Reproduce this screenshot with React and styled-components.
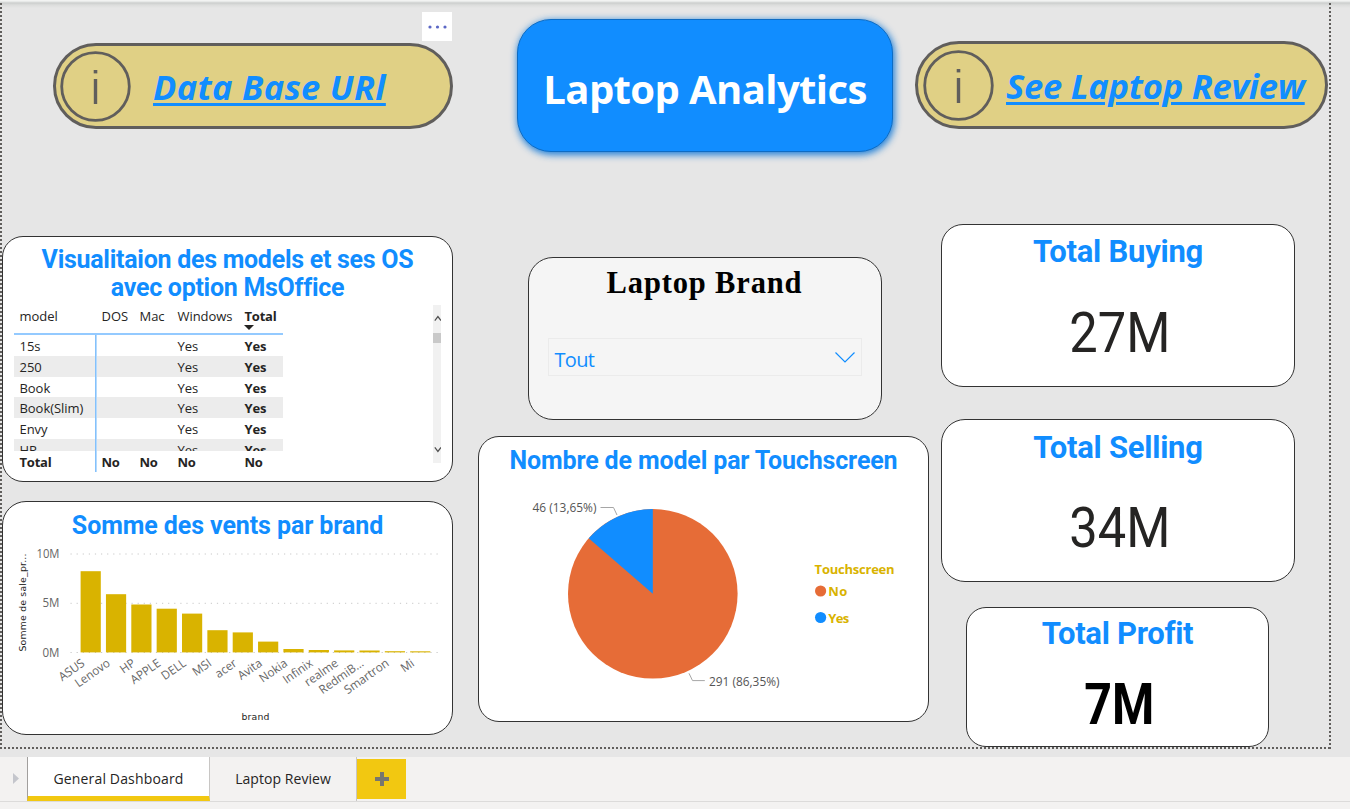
import React from "react";
import styled, { createGlobalStyle } from "styled-components";

const GlobalStyle = createGlobalStyle`
  * { box-sizing: border-box; }
  body {
    margin: 0;
    background: #e6e6e6;
    font-family: "Open Sans", "Noto Sans", sans-serif;
    color: #252423;
    overflow: hidden;
  }
`;

const azure = "#118dff";
const gold = "#d9b300";
const din = `Roboto, "Liberation Sans", sans-serif`;

const Page = styled.div`
  display: flex;
  flex-direction: column;
  width: 1350px;
  height: 809px;
  background: linear-gradient(#f2f3f2 0 1px, #f0f2f1 1px, #cccecd 3px, #dcdddc 5px, #e6e6e6 8px);
`;

const Canvas = styled.main`
  width: 1331px;
  height: 746px;
  margin-top: 3px;
  margin-bottom: 8px;
  padding: 0 2px;
  background:
    repeating-linear-gradient(#605e5c 0 2px, transparent 2px 4px) 0 0 / 2px 100% no-repeat,
    repeating-linear-gradient(#605e5c 0 2px, transparent 2px 4px) 100% 0 / 2px 100% no-repeat,
    repeating-linear-gradient(90deg, #605e5c 0 2px, transparent 2px 4px) 0 100% / 100% 2px no-repeat;
`;

const Header = styled.header`
  display: flex;
  align-items: flex-start;
  height: 221px;
  padding-left: 51px;
`;

const Pill = styled.a`
  position: relative;
  display: flex;
  align-items: center;
  flex: none;
  width: ${(p) => p.$width}px;
  height: ${(p) => p.$height}px;
  margin-top: ${(p) => p.$top}px;
  padding-left: ${(p) => p.$inset}px;
  border: 3px solid #605e5c;
  border-radius: 44px;
  background: #e0d085;
`;

const PillText = styled.span`
  margin-left: ${(p) => p.$gap}px;
  padding-top: 2px;
  color: ${azure};
  font: italic 700 34.5px/48px "Open Sans", sans-serif;
  letter-spacing: ${(p) => p.$spacing}px;
  white-space: nowrap;
  text-decoration: underline;
  text-decoration-thickness: 3px;
  text-underline-offset: 3px;
`;

const MoreButton = styled.button`
  position: absolute;
  top: -34px;
  right: -2px;
  display: flex;
  align-items: center;
  justify-content: center;
  width: 30px;
  height: 29px;
  padding: 0;
  border: 0;
  background: #fff;
`;

const Banner = styled.h1`
  flex: none;
  width: 376px;
  height: 133px;
  margin: 16px 22px 0 64px;
  border: 1px solid #0d6cc4;
  border-radius: 34px;
  background: ${azure};
  box-shadow: 1px 2px 7px 1px rgba(17, 120, 215, 0.9);
  color: #fff;
  font: 700 40px/138px "Open Sans", sans-serif;
  letter-spacing: -0.6px;
  text-align: center;
  white-space: nowrap;
`;

const Body = styled.div`
  display: flex;
  align-items: flex-start;
`;

const Column = styled.section`
  display: flex;
  flex-direction: column;
  align-items: center;
  flex: none;
  width: ${(p) => p.$width}px;
  gap: ${(p) => p.$gap}px;
  margin-left: ${(p) => p.$left || 0}px;
  padding-top: ${(p) => p.$top || 0}px;
`;

const Card = styled.article`
  display: flex;
  flex-direction: column;
  flex: none;
  width: ${(p) => p.$width}px;
  height: ${(p) => p.$height}px;
  margin-top: ${(p) => p.$push || 0}px;
  margin-left: ${(p) => p.$shift || 0}px;
  border: 1px solid #333;
  border-radius: ${(p) => p.$radius || 21}px;
  background: ${(p) => p.$fill || "#fff"};
  overflow: hidden;
`;

const CardTitle = styled.h2`
  flex: none;
  margin: 0;
  padding-top: ${(p) => p.$top}px;
  color: ${azure};
  font: 700 ${(p) => p.$size || 25}px/28px ${din};
  letter-spacing: ${(p) => p.$spacing || 0}px;
  text-align: center;
  white-space: pre-line;
`;

const Drawing = styled.svg`
  display: block;
  flex: none;
`;

const MatrixArea = styled.div`
  display: flex;
  justify-content: space-between;
  padding: 3px 11px 0 11px;
`;

const Matrix = styled.div`
  width: 269px;
  height: 167px;
  font-size: 13px;
  line-height: 20px;
`;

const MatrixRow = styled.div`
  display: grid;
  grid-template-columns: 82px 38px 38px 67px 44px;
  height: ${(p) => p.$height || 20.75}px;
  background: ${(p) => (p.$striped ? "#ececec" : "#fff")};
  border-bottom: ${(p) => (p.$head ? "2px solid #94caff" : "0")};
`;

const MatrixBody = styled.div`
  height: 116px;
  overflow: hidden;
`;

const Cell = styled.span`
  position: relative;
  padding-left: 5.5px;
  padding-top: 1px;
  letter-spacing: ${(p) => (p.$bold ? -0.2 : -0.05)}px;
  font-weight: ${(p) => (p.$bold ? 700 : 400)};
  box-shadow: ${(p) => (p.$ruled ? "inset -1px 0 #84c1fb, 1px 0 #b5dafd" : "none")};
`;

const SortMark = styled.i`
  position: absolute;
  left: 5px;
  bottom: 3px;
  border: 5px solid transparent;
  border-top-color: #252423;
  border-bottom: 0;
`;

const Scrollbar = styled.div`
  display: flex;
  flex-direction: column;
  align-items: center;
  width: 8px;
  height: 158px;
  background: #f1f1f1;
`;

const Thumb = styled.div`
  width: 8px;
  height: 10px;
  margin: 11px 0 auto;
  background: #c9c9c9;
`;

const SlicerTitle = styled.h2`
  margin: 8px 0 0;
  color: #000;
  font: 700 30.5px/34px "Liberation Serif", serif;
  letter-spacing: 0.85px;
  text-align: center;
`;

const Dropdown = styled.div`
  display: flex;
  align-items: center;
  justify-content: space-between;
  height: 38px;
  margin: 38px 19px 0;
  padding: 4px 6px 0;
  border: 1px solid #ebebeb;
  color: ${azure};
  font-size: 20px;
  letter-spacing: -0.7px;
`;

const Chevron = styled(Drawing)`
  margin-bottom: 4px;
`;

const Value = styled.div`
  margin-top: ${(p) => p.$top}px;
  padding-left: 4px;
  color: ${(p) => (p.$bold ? "#000" : "#252423")};
  font: ${(p) => (p.$bold ? "700 57.5px" : "400 55px")}/64px ${din};
  text-align: center;
  transform: scaleX(${(p) => (p.$bold ? 0.84 : 0.92)});
`;

const TabBar = styled.nav`
  display: flex;
  height: 52px;
  padding-left: 8px;
  background: linear-gradient(#f3f2f1 44px, #dcdbda 44px 45px, #f3f2f1 45px);
  font-size: 14px;
`;

const PagerArrow = styled.span`
  width: 19px;
  padding: 16px 0 0 5px;
`;

const Tab = styled.div`
  width: ${(p) => p.$width}px;
  height: 44px;
  border-right: 1px solid #c8c6c4;
  border-left: ${(p) => (p.$active ? "1px solid #a19f9d" : "0")};
  border-bottom: ${(p) => (p.$active ? "5px solid #f2c811" : "0")};
  background: ${(p) => (p.$active ? "#fff" : "transparent")};
  font-weight: ${(p) => (p.$active ? 500 : 400)};
  line-height: 43px;
  letter-spacing: ${(p) => p.$spacing}px;
  text-align: center;
  white-space: nowrap;
`;

const AddTab = styled.button`
  display: flex;
  align-items: center;
  justify-content: center;
  width: 49px;
  height: 40px;
  margin-top: 2px;
  padding: 0;
  border: 0;
  background: #f2c811;
`;

const InfoIcon = () => (
  <Drawing width="71" height="71" viewBox="0 0 71 71" fill="none" stroke="#605e5c">
    <circle cx="35.5" cy="35.5" r="33.8" strokeWidth="2.8" />
    <path d="M35.5 28v25" strokeWidth="3.4" />
    <path d="M35.5 19v3.4" strokeWidth="3.6" />
  </Drawing>
);

const rows = ["15s", "250", "Book", "Book(Slim)", "Envy", "HP"];

const bars = [
  ["ASUS", 571.2], ["Lenovo", 594.2], ["HP", 604.5], ["APPLE", 608.7], ["DELL", 613.6],
  ["MSI", 630.2], ["acer", 632.4], ["Avita", 641.6], ["Nokia", 649], ["Infinix", 650],
  ["realme", 650.4], ["RedmiB...", 650.5], ["Smartron", 651.2], ["Mi", 651.3],
];

const ModelMatrix = () => (
  <MatrixArea>
    <Matrix>
      <MatrixRow $height={30} $head>
        <Cell>model</Cell><Cell>DOS</Cell><Cell>Mac</Cell><Cell>Windows</Cell>
        <Cell $bold>Total<SortMark /></Cell>
      </MatrixRow>
      <MatrixBody>
        {rows.map((name, i) => (
          <MatrixRow key={name} $striped={i % 2 === 1}>
            <Cell $ruled>{name}</Cell><Cell /><Cell /><Cell>Yes</Cell><Cell $bold>Yes</Cell>
          </MatrixRow>
        ))}
      </MatrixBody>
      <MatrixRow>
        <Cell $bold $ruled>Total</Cell><Cell $bold>No</Cell><Cell $bold>No</Cell>
        <Cell $bold>No</Cell><Cell $bold>No</Cell>
      </MatrixRow>
    </Matrix>
    <Scrollbar>
      <Drawing width="8" height="17" viewBox="0 0 8 17" fill="none" stroke="#505050" strokeWidth="1.2">
        <path d="M1.8 15.6 4.9 11.6 8 15.6" />
      </Drawing>
      <Thumb />
      <Drawing width="8" height="18" viewBox="0 0 8 18" fill="none" stroke="#505050" strokeWidth="1.2">
        <path d="M1.8 2.4 4.9 6.4 8 2.4" />
      </Drawing>
    </Scrollbar>
  </MatrixArea>
);

const SalesChart = () => (
  <Drawing width="449" height="194" viewBox="3 540 449 194" fontFamily="Open Sans, sans-serif" fontSize="12" fill="#666">
    {[554, 603.3, 652.5].map((y) => (
      <path key={y} d={`M70.5 ${y}H438`} stroke="#c8c8c8" strokeDasharray="1.2 4.9" />
    ))}
    <text x="36.5" y="558" textLength="23" lengthAdjust="spacingAndGlyphs">10M</text>
    <text x="42.5" y="607.3" textLength="17" lengthAdjust="spacingAndGlyphs">5M</text>
    <text x="42.5" y="656.5" textLength="17" lengthAdjust="spacingAndGlyphs">0M</text>
    {bars.map(([name, top], i) => (
      <g key={name}>
        <rect x={80.6 + i * 25.35} y={top} width="20.2" height={652.4 - top} fill={gold} />
        <text
          transform={`translate(${85.6 + i * 25.35} 665) rotate(-35) scale(.97 1)`}
          textAnchor="end"
        >{name}</text>
      </g>
    ))}
    <g fill="#252423" fontFamily="DejaVu Sans, sans-serif" fontSize="9.3">
      <text transform="translate(25.6 651.5) rotate(-90)" textLength="98">Somme de sale_pr...</text>
      <text x="241.5" y="719.8" textLength="28">brand</text>
    </g>
  </Drawing>
);

const TouchscreenPie = () => (
  <Drawing width="449" height="245" viewBox="479 475 449 245" fontFamily="Open Sans, sans-serif">
    <circle cx="652.8" cy="593.8" r="84.8" fill="#e66c37" />
    <path d="M652.8 593.8V509A84.8 84.8 0 0 0 588.7 538.3Z" fill={azure} />
    <g fill="none" stroke="#a6a6a6">
      <path d="M600.5 507.5h13l3.5 7.5" />
      <path d="M689 673.3l3.5 7.3h12.3" />
    </g>
    <g fill="#555" fontSize="12">
      <text x="532.5" y="512.3" textLength="64" lengthAdjust="spacingAndGlyphs">46 (13,65%)</text>
      <text x="709" y="686" textLength="70.5" lengthAdjust="spacingAndGlyphs">291 (86,35%)</text>
    </g>
    <g fill={gold} fontSize="13" fontWeight="700">
      <text x="814.6" y="574" textLength="80">Touchscreen</text>
      <text x="828.3" y="596" textLength="19">No</text>
      <text x="828.3" y="623" textLength="21">Yes</text>
    </g>
    <circle cx="820.6" cy="591" r="5.6" fill="#e66c37" />
    <circle cx="820.6" cy="617.5" r="5.6" fill={azure} />
  </Drawing>
);

export default function App() {
  return (
    <Page>
      <GlobalStyle />
      <Canvas>
        <Header>
          <Pill $width={400} $height={86} $top={40} $inset={4}>
            <InfoIcon />
            <PillText $gap={22} $spacing={0.3}>Data Base URl</PillText>
            <MoreButton>
              <Drawing width="20" height="4" viewBox="0 0 20 4" fill="#5b67c5">
                <circle cx="3" cy="2" r="1.6" />
                <circle cx="10.5" cy="2" r="1.6" />
                <circle cx="18" cy="2" r="1.6" />
              </Drawing>
            </MoreButton>
          </Pill>
          <Banner>Laptop Analytics</Banner>
          <Pill $width={413} $height={88} $top={38} $inset={5}>
            <InfoIcon />
            <PillText $gap={12} $spacing={-0.25}>See Laptop Review</PillText>
          </Pill>
        </Header>
        <Body>
          <Column $width={451} $gap={19} $top={12}>
            <Card $width={451} $height={246}>
              <CardTitle $top={9} $spacing={-0.28}>{"Visualitaion des models et ses OS\navec option MsOffice"}</CardTitle>
              <ModelMatrix />
            </Card>
            <Card $width={451} $height={234} $radius={24}>
              <CardTitle $top={10} $spacing={-0.1}>Somme des vents par brand</CardTitle>
              <SalesChart />
            </Card>
          </Column>
          <Column $width={451} $gap={16} $left={25} $top={33}>
            <Card $width={354} $height={163} $radius={25} $fill="#f5f5f5" $shift={2}>
              <SlicerTitle>Laptop Brand</SlicerTitle>
              <Dropdown>
                Tout
                <Chevron width="20" height="11" viewBox="0 0 20 11" fill="none" stroke={azure} strokeWidth="1.2">
                  <path d="M.5.5 10 10 19.5.5" />
                </Chevron>
              </Dropdown>
            </Card>
            <Card $width={451} $height={286}>
              <CardTitle $top={10} $spacing={-0.15}>Nombre de model par Touchscreen</CardTitle>
              <TouchscreenPie />
            </Card>
          </Column>
          <Column $width={355} $gap={32} $left={11}>
            <Card $width={354} $height={163} $radius={22} $shift={1}>
              <CardTitle $top={13} $size={31} $spacing={-0.25}>Total Buying</CardTitle>
              <Value $top={35}>27M</Value>
            </Card>
            <Card $width={354} $height={163} $radius={24} $shift={1}>
              <CardTitle $top={14} $size={31} $spacing={-0.25}>Total Selling</CardTitle>
              <Value $top={34}>34M</Value>
            </Card>
            <Card $width={303} $height={140} $radius={20} $push={-7}>
              <CardTitle $top={12} $size={31} $spacing={-0.3}>Total Profit</CardTitle>
              <Value $top={25} $bold>7M</Value>
            </Card>
          </Column>
        </Body>
      </Canvas>
      <TabBar>
        <PagerArrow>
          <Drawing width="6" height="11" viewBox="0 0 6 11" fill="#c4c6cc"><path d="M0 0 6 5.5 0 11Z" /></Drawing>
        </PagerArrow>
        <Tab $active $width={183} $spacing={0.15}>General Dashboard</Tab>
        <Tab $width={147} $spacing={0.05}>Laptop Review</Tab>
        <AddTab>
          <Drawing width="14" height="14" viewBox="0 0 14 14" stroke="#77766f" strokeWidth="4">
            <path d="M7 0v14M0 7h14" />
          </Drawing>
        </AddTab>
      </TabBar>
    </Page>
  );
}
